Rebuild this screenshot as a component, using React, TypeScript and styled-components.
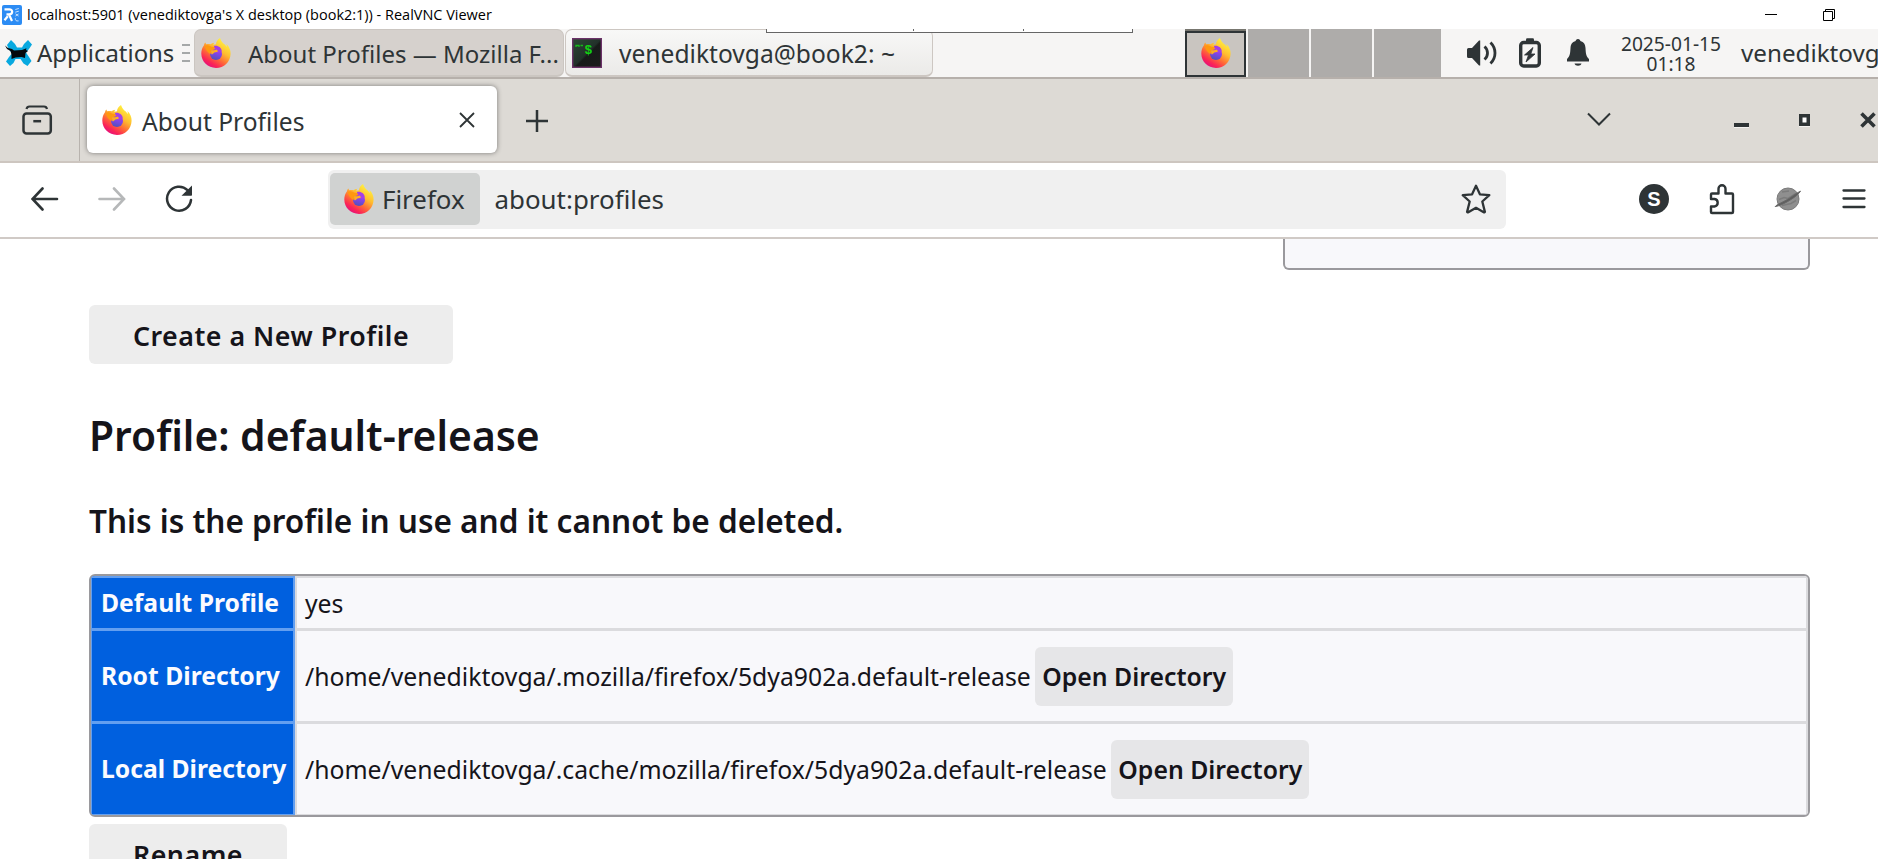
import React from 'react';
import styled, { createGlobalStyle } from 'styled-components';

const GlobalStyle = createGlobalStyle`
  *, *::before, *::after { box-sizing: border-box; }
  html, body { margin: 0; padding: 0; overflow: hidden; background: #fff; }
  svg { display: block; flex: none; }
`;

const Screen = styled.div`
  display: flex;
  flex-direction: column;
  width: 1878px;
  height: 859px;
  overflow: hidden;
  background: #fff;
  color: #2e3436;
  font-family: "Noto Sans", "Open Sans", sans-serif;
  font-size: 24px;
  white-space: nowrap;
`;

/* Viewer title bar */

const TitleBar = styled.header`
  display: flex;
  align-items: center;
  flex: none;
  height: 29px;
  padding: 0 43px 0 2px;
  background: #fff;
  color: #000;
`;

const ViewerTitle = styled.span`
  flex: 1;
  margin-left: 5px;
  font-family: "Open Sans", "Noto Sans", sans-serif;
  font-size: 14.48px;
  line-height: 20px;
`;

const WindowGlyphs = styled.div`
  display: flex;
  align-items: center;
  gap: 46px;
`;

/* Desktop panel */

const Panel = styled.div`
  position: relative;
  display: flex;
  flex: none;
  height: 50px;
  background: #f6f5f4;
  border-bottom: 2px solid #b6b0ab;
  overflow: hidden;

  & > * { flex: none; }
`;

const AppsMenu = styled.div`
  display: flex;
  align-items: center;
  width: 194px;
  padding-left: 5px;
`;

const AppsLabel = styled.span`
  width: 145px;
  margin-left: 5px;
  font-size: 23.9px;
  line-height: 48px;
`;

const TaskButton = styled.div<{ $active?: boolean; $width: number }>`
  display: flex;
  align-items: center;
  width: ${(p) => p.$width}px;
  height: 48px;
  margin-right: 1px;
  padding-left: 6px;
  border: 1px solid ${(p) => (p.$active ? '#cbc6c1' : '#cdc7c2')};
  border-bottom-width: 2px;
  border-radius: 7px;
  background: ${(p) => (p.$active ? '#d6d1cd' : 'linear-gradient(#f8f8f7, #ebeae8)')};
`;

const TaskLabel = styled.span<{ $size?: number }>`
  margin-left: 17px;
  padding-top: 1px;
  font-size: ${(p) => p.$size ?? 24}px;
  line-height: 47px;
`;

const ToolbarPeek = styled.div`
  position: absolute;
  left: 766px;
  top: 0;
  display: grid;
  grid-template-columns: 146px 110px 110px;
  width: 367px;
  height: 4px;
  background: #fff;
  border: solid #666;
  border-width: 0 1px 1px;
`;

const PeekCell = styled.i`
  height: 2px;
  & + & { border-left: 1px solid #666; }
`;

const Pager = styled.div`
  display: flex;
  gap: 2px;
  margin-left: 251px;
`;

const Workspace = styled.div<{ $width: number }>`
  width: ${(p) => p.$width}px;
  height: 48px;
  background: #aeacaa;
`;

const ActiveWorkspace = styled.div`
  display: flex;
  align-items: center;
  justify-content: center;
  width: 61px;
  height: 48px;
  padding-bottom: 2px;
  border-top: 2px solid #77766f;
  background: #c9c5c0;
  box-shadow: inset 0 0 0 2px #2e3436;
`;

const Tray = styled.div`
  display: flex;
  align-items: center;
  margin-left: 26px;
  padding-bottom: 1px;
`;

const TrayItem = styled.div<{ $before: number }>`
  margin-left: ${(p) => p.$before}px;
`;

const Clock = styled.div`
  width: 104px;
  margin-left: 30px;
  padding-top: 5px;
  font-size: 19.2px;
  line-height: 20px;
  text-align: center;
`;

const UserName = styled.span`
  margin-left: 18px;
  font-size: 24.2px;
  line-height: 48px;
`;

/* Browser chrome */

const TabStrip = styled.div`
  display: flex;
  flex: none;
  height: 84px;
  background: #dddad5;
  border-bottom: 2px solid #cdc6c0;
`;

const FirefoxView = styled.div`
  display: flex;
  width: 79.5px;
  padding: 26px 0 0 22px;
  border-right: 1.5px solid #b8b3ae;
`;

const Tab = styled.div`
  display: flex;
  align-items: center;
  width: 410px;
  height: 67px;
  margin: 7px 0 0 7.5px;
  padding: 0 22px 0 15px;
  border-radius: 6px;
  background: #fff;
  box-shadow: 0 0 5px rgba(0, 0, 0, 0.45);
`;

const TabTitle = styled.span`
  flex: 1;
  margin-left: 10px;
  padding-top: 4px;
  font-size: 24.6px;
  line-height: 40px;
`;

const NewTab = styled.div`
  margin: 31px 0 0 29px;
`;

const FrameButtons = styled.div`
  display: flex;
  align-items: flex-start;
  margin: 33px 2px 0 auto;
`;

const FrameGlyph = styled.div<{ $before?: number; $drop?: number }>`
  margin-left: ${(p) => p.$before ?? 0}px;
  padding-top: ${(p) => p.$drop ?? 0}px;
`;

const NavBar = styled.nav`
  display: flex;
  align-items: center;
  flex: none;
  height: 76px;
  padding: 0 12px 2px 31px;
  background: #fff;
  border-bottom: 2px solid #d0cac6;
`;

const NavButtons = styled.div`
  display: flex;
  align-items: center;
  gap: 39px;
  width: 297px;
`;

const UrlBar = styled.div`
  display: flex;
  align-items: center;
  width: 1178px;
  height: 59px;
  padding: 0 15px 0 2px;
  border-radius: 6px;
  background: #f0f0f0;
`;

const IdentityChip = styled.div`
  display: flex;
  align-items: center;
  width: 150px;
  height: 52px;
  padding-left: 14px;
  border-radius: 5px;
  background: #d0d2d1;
`;

const UrlText = styled.span<{ $gap: number }>`
  margin-left: ${(p) => p.$gap}px;
  font-size: 25.9px;
  line-height: 50px;
`;

const StarSlot = styled.div`
  margin-left: auto;
`;

const Extensions = styled.div`
  display: flex;
  align-items: center;
  justify-content: space-between;
  width: 227px;
  margin-left: auto;
`;

const ExtensionBadge = styled.div`
  display: flex;
  align-items: center;
  justify-content: center;
  width: 30px;
  height: 30px;
  border-radius: 50%;
  background: #2e3436;
  color: #fff;
  font-family: "Liberation Sans", sans-serif;
  font-size: 20px;
  font-weight: 700;
  line-height: 30px;
`;

/* Page */

const Page = styled.main`
  display: flex;
  flex-direction: column;
  align-items: flex-start;
  flex: 1;
  min-height: 0;
  padding: 0 68px 0 89px;
  overflow: hidden;
  color: #15141a;
  font-size: 24.75px;
`;

const NoticeEnd = styled.div`
  align-self: flex-end;
  flex: none;
  width: 527px;
  height: 31px;
  border: 2px solid #9a999d;
  border-top: 0;
  border-radius: 0 0 6px 6px;
  background: #f8f8fb;
`;

const ActionButton = styled.button<{ $width: number; $top: number }>`
  flex: none;
  width: ${(p) => p.$width}px;
  height: 59px;
  margin: ${(p) => p.$top}px 0 0;
  padding: 3px 0 0;
  border: 0;
  border-radius: 6px;
  background: #ededed;
  color: #15141a;
  font: 600 26.8px/56px "Noto Sans", sans-serif;
  letter-spacing: 0.5px;
  text-align: center;
`;

const ProfileName = styled.h2`
  margin: 41px 0 0;
  font-size: 40.8px;
  font-weight: 600;
  line-height: 60px;
`;

const ProfileNote = styled.h3`
  margin: 33px 0 0;
  font-size: 31.55px;
  font-weight: 600;
  line-height: 46px;
`;

const ProfileTable = styled.div`
  flex: none;
  width: 1721px;
  height: 243px;
  margin-top: 30px;
  border: 2px solid #9a999d;
  border-radius: 6px;
  background: #f8f8fb;
  overflow: hidden;
`;

const TableRow = styled.div<{ $height: number }>`
  display: grid;
  grid-template-columns: 204px 1fr;
  height: ${(p) => p.$height}px;
`;

const RowLabel = styled.div`
  display: flex;
  align-items: center;
  padding: 0 0 1px 9px;
  border: solid #639ff0;
  border-width: 2px 2px 1px 1px;
  background: #0060df;
  color: #fbfbfe;
  font-size: 24.7px;
  font-weight: 700;
`;

const RowValue = styled.div`
  display: flex;
  align-items: center;
  padding: 0 0 0 8px;
  border: solid #dbdbde;
  border-width: 2px 2px 1px 2px;
`;

const InlineButton = styled.button`
  width: 198px;
  height: 59px;
  margin: 0 0 0 4.5px;
  padding: 0;
  border: 0;
  border-radius: 6px;
  background: #e6e6e8;
  color: #15141a;
  font: 600 24.8px/59px "Noto Sans", sans-serif;
  text-align: center;
`;

const FirefoxLogo = ({ size = 30 }: { size?: number }) => {
  const id = React.useId();
  return (
    <svg width={size} height={size} viewBox="0 0 30 30">
      <defs>
        <linearGradient id={`${id}b`} x1="0.8" y1="0.1" x2="0.25" y2="0.95">
          <stop offset="0" stopColor="#fff13f" />
          <stop offset="0.35" stopColor="#ffbd2f" />
          <stop offset="0.62" stopColor="#ff6b36" />
          <stop offset="0.85" stopColor="#fb2457" />
          <stop offset="1" stopColor="#e5127b" />
        </linearGradient>
        <linearGradient id={`${id}c`} x1="0.7" y1="0" x2="0.4" y2="1">
          <stop offset="0" stopColor="#b43ee8" />
          <stop offset="0.5" stopColor="#8045e6" />
          <stop offset="1" stopColor="#4f52b8" />
        </linearGradient>
      </defs>
      <path
        fill={`url(#${id}b)`}
        d="M19 0c1 2 1.200 3.600 3.400 5.400C24 6.400 25 7.700 25.800 9c.1-1.200-.1-2.200-.4-3.100 2.800 2.600 4.300 6 4.200 9.800C29.300 24 23 30 15 30S.3 23.800.3 15.600c0-3.200 1-6 2.700-8.300.1-.900.6-2.200 1.400-2.800.2.800.4 1.300.9 1.700 1.400-.4 3-.4 4.300.1 1-1 2.300-1.500 3.700-1.600-.5.600-.9 1.300-1 2.100 1 .2 1.500-.2 2.700-.5 0-2.400 1.700-5 4-6.300Z"
      />
      <circle cx="15" cy="16" r="6" fill={`url(#${id}c)`} />
      <path fill="#a43fe6" d="M13 8c4.200-.8 7.500 1.700 7.800 5.500l-4 1.400-3.600-3Z" />
      <path fill="#ff980f" d="M3.700 8.100c2.200-1.400 4.500-1.100 6.700.6 1.600-.2 3.200.5 3.900 1.700-.8 1.100-2.800 1.300-3.500 2.200-.9 1-.4 2.800-1.500 3.400-2.400-1.300-4.700-3.900-5.600-7.900Z" />
      <path fill="#ffae21" d="M10 12.600c1.500-.5 4-.2 5.500-1.100 1 .6 1.400 1.300 1.300 2-1 .9-2.600.4-3.700 1.300-1 .8-1.300 1.700-2.800 1.500Z" />
    </svg>
  );
};

const ViewerLogo = () => (
  <svg width="20" height="20" viewBox="0 0 20 20">
    <rect width="20" height="20" rx="2" fill="#2c8cf4" />
    <path d="M2.500 4.300h4.700c4 0 4 5 0 5H4.500M7 9.500l3 6.500M2.500 15.200l3.300-4" fill="none" stroke="#fff" strokeWidth="2.200" />
    <path d="M13.300 4.500l3.500-1M13.300 7.200l3.500-1M13.500 8.800l3 2.200M13.500 11l3-2M13.300 13.300c0 2 .6 3 3.300 2.600" fill="none" stroke="#c4e0ff" strokeWidth="1" />
  </svg>
);

const XfceLogo = () => (
  <svg width="27" height="26" viewBox="0 0 27 26">
    <path
      d="M6 0l4 4 2 3.500h5L19 4l4-4 4 4.500-3 4.500-3 3.500 3 4.500 2.500 4-4 5-4-2.500-3-4.500h-5L8.500 23 5 26l-4-4.500L4 17l3-3.500-3-4-2-4.500Z"
      fill="#08a9e0"
    />
    <path d="M0 5.500l3 2.500 4 1 2 1.500 8-.5 4.500-1.800-.5 1.800 2 1-2.500 2-.5 5-3.500-1-6 .5-4 1.500 0-4.500L5.500 11 2 9Z" fill="#04090d" />
  </svg>
);

const Grip = () => (
  <svg width="8" height="18" viewBox="0 0 8 18" stroke="#8b8e8f" strokeWidth="1.500">
    <path d="M0 1h8M0 9h8M0 17h8" />
  </svg>
);

const TerminalIcon = () => (
  <svg width="30" height="30" viewBox="0 0 30 30">
    <defs>
      <linearGradient id="term" x1="0" y1="0" x2="1" y2="1">
        <stop offset="0" stopColor="#2b4a34" />
        <stop offset="0.5" stopColor="#22302a" />
        <stop offset="0.55" stopColor="#171a19" />
        <stop offset="1" stopColor="#1c1c1c" />
      </linearGradient>
    </defs>
    <rect x="0.700" y="0.700" width="28.600" height="28.600" fill="url(#term)" stroke="#6b3268" strokeWidth="1.400" />
    <path d="M4 9V7.500h3V9M8.500 7.500h2.500" fill="none" stroke="#17b81c" strokeWidth="1.300" />
    <text x="12.500" y="15.500" fill="#12d313" fontFamily="Liberation Mono, monospace" fontWeight="700" fontSize="13">$</text>
  </svg>
);

const VolumeIcon = () => (
  <svg width="30" height="26" viewBox="0 0 30 26">
    <path d="M0 9.500Q0 8 1.500 8H5l7-7.500h1.200v25H12L5 18H1.500Q0 18 0 16.500Z" fill="#2e3436" />
    <path d="M17.500 6.500c4 3.500 4 9.500 0 13M23.500 2.500c6 6 6 15 0 21" fill="none" stroke="#2e3436" strokeWidth="2.800" />
  </svg>
);

const BatteryIcon = () => (
  <svg width="22" height="30" viewBox="0 0 22 30">
    <path d="M7 4V1.500Q7 .3 8.300.3h5.400Q15 .3 15 1.500V4" fill="#2e3436" />
    <rect x="1.700" y="4.500" width="18.600" height="23.500" rx="3" fill="none" stroke="#2e3436" strokeWidth="3.400" />
    <path d="M14 9.500L5.500 17h4l-2.500 7 9-8h-4.200Z" fill="#2e3436" stroke="#2e3436" strokeWidth="0.800" />
  </svg>
);

const BellIcon = () => (
  <svg width="22" height="27" viewBox="0 0 22 27" fill="#2e3436">
    <path d="M11 0c1.500 0 2.300 1 2.300 2 3.700.8 5 3.500 5.200 7 .3 6 .8 8.500 3.500 11v2.500H0V20c2.700-2.500 3.200-5 3.500-11 .2-3.500 1.500-6.200 5.200-7C8.700 1 9.500 0 11 0Z" />
    <path d="M7.500 24.500h7c-.7 3-6.300 3-7 0Z" />
  </svg>
);

const ArchiveIcon = () => (
  <svg width="31" height="30" viewBox="0 0 31 30" fill="none" stroke="#2e3436">
    <path d="M4.500 4q.5-2.500 3-2.500h14.500q2.500 0 3 2.500" strokeWidth="2.200" />
    <rect x="1.500" y="8.500" width="27.300" height="20" rx="3" strokeWidth="2.500" />
    <path d="M11.300 16.200h7.800" strokeWidth="2.500" />
  </svg>
);

const BackIcon = ({ faded }: { faded?: boolean }) => (
  <svg width="28" height="24" viewBox="0 0 28 24" fill="none" stroke={faded ? '#b6b8b9' : '#2e3436'} strokeWidth="2.600" strokeLinecap="round">
    {faded ? <path d="M1.500 12h24M16 1.500L26 12 16 22.500" /> : <path d="M26 12h-24M11.500 1.500L1.500 12l10 10.500" />}
  </svg>
);

const ReloadIcon = () => (
  <svg width="28" height="28" viewBox="0 0 28 28">
    <path d="M22.500 5.200A12 12 0 1 0 26 15" fill="none" stroke="#2e3436" strokeWidth="2.500" strokeLinecap="round" />
    <path d="M27 .5V10q0 .8-.8.800H16.500Z" fill="#2e3436" />
  </svg>
);

const StarIcon = () => (
  <svg width="30" height="30" viewBox="0 0 30 30" fill="none" stroke="#2e3436" strokeWidth="2.300" strokeLinejoin="round">
    <path d="M15 1.800l3.900 8.500 9.400.9-7 6.300 2.600 10.400q-.3.900-1.200.300L15 23.800l-7.700 4.400q-.900.600-1.200-.3L8.700 17.500l-7-6.300 9.400-.9Z" />
  </svg>
);

const PuzzleIcon = () => (
  <svg width="26" height="31" viewBox="0 0 26 31" fill="none" stroke="#2e3436" strokeWidth="2.400" strokeLinejoin="round">
    <path d="M2 15V10.500Q2 9.500 3 9.500H9.500V4.800a3.500 3.500 0 0 1 7 0V9.500H23q1 0 1 1V28q0 1-1 1H3q-1 0-1-1V22.500h3.500a3.800 3.800 0 0 0 0-7.500Z" />
  </svg>
);

const PlanetIcon = () => (
  <svg width="28" height="24" viewBox="0 0 28 24">
    <circle cx="14" cy="12" r="11" fill="#8f8f8f" stroke="#7b7b7b" />
    <path d="M5 12.500l5-2 4 1 8-5M8 5l7-1M8 18.500l9-2 5-3" stroke="#7c7c7c" strokeWidth="1.500" fill="none" />
    <path d="M26.500 4.200C24 9 9 18.500 1.200 19.600 3 17.500 6 16.500 12 13.300 18 10 22 6 26.500 4.200Z" fill="#5d5d5d" stroke="#686868" />
  </svg>
);

const MenuIcon = () => (
  <svg width="24" height="20" viewBox="0 0 24 20" stroke="#2e3436" strokeWidth="2.300" strokeLinecap="round">
    <path d="M1.500 1.500h21M1.500 9.500h21M1.500 18h21" />
  </svg>
);

const details = [
  { label: 'Default Profile', value: 'yes', height: 53, open: false },
  { label: 'Root Directory', value: '/home/venediktovga/.mozilla/firefox/5dya902a.default-release', height: 93, open: true },
  { label: 'Local Directory', value: '/home/venediktovga/.cache/mozilla/firefox/5dya902a.default-release', height: 93, open: true },
];

export default function App() {
  return (
    <>
      <GlobalStyle />
      <Screen>
        <TitleBar>
          <ViewerLogo />
          <ViewerTitle>localhost:5901 (venediktovga's X desktop (book2:1)) - RealVNC Viewer</ViewerTitle>
          <WindowGlyphs>
            <svg width="12" height="12" stroke="#000"><path d="M0 5.500h12" /></svg>
            <svg width="12" height="12" fill="none" stroke="#000">
              <path d="M.5 2.500h9v9h-9ZM2.500 2.500V.5h9v9h-2" />
            </svg>
          </WindowGlyphs>
        </TitleBar>

        <Panel>
          <AppsMenu>
            <XfceLogo />
            <AppsLabel>Applications</AppsLabel>
            <Grip />
          </AppsMenu>
          <TaskButton $active $width={370}>
            <FirefoxLogo />
            <TaskLabel>About Profiles — Mozilla F...</TaskLabel>
          </TaskButton>
          <TaskButton $width={368}>
            <TerminalIcon />
            <TaskLabel $size={24.6}>venediktovga@book2: ~</TaskLabel>
          </TaskButton>
          <ToolbarPeek><PeekCell /><PeekCell /><PeekCell /></ToolbarPeek>
          <Pager>
            <ActiveWorkspace><FirefoxLogo /></ActiveWorkspace>
            <Workspace $width={61} />
            <Workspace $width={61} />
            <Workspace $width={67} />
          </Pager>
          <Tray>
            <VolumeIcon />
            <TrayItem $before={22}><BatteryIcon /></TrayItem>
            <TrayItem $before={26}><BellIcon /></TrayItem>
          </Tray>
          <Clock>2025-01-15<br />01:18</Clock>
          <UserName>venediktovga</UserName>
        </Panel>

        <TabStrip>
          <FirefoxView><ArchiveIcon /></FirefoxView>
          <Tab>
            <FirefoxLogo />
            <TabTitle>About Profiles</TabTitle>
            <svg width="16" height="16" stroke="#2e3436" strokeWidth="1.800"><path d="M1 1l14 14M15 1L1 15" /></svg>
          </Tab>
          <NewTab>
            <svg width="22" height="22" stroke="#2e3436" strokeWidth="2.500"><path d="M0 11h22M11 0v22" /></svg>
          </NewTab>
          <FrameButtons>
            <FrameGlyph>
              <svg width="24" height="14" fill="none" stroke="#2e3436" strokeWidth="2"><path d="M1 1.500L12 12.500 23 1.500" /></svg>
            </FrameGlyph>
            <FrameGlyph $before={123} $drop={11}>
              <svg width="15" height="5"><rect width="15" height="4" fill="#2e3436" /><rect y="4" width="15" height="1" fill="#f4f2f0" /></svg>
            </FrameGlyph>
            <FrameGlyph $before={50} $drop={2}>
              <svg width="11" height="13"><rect y="12" width="11" height="1" fill="#f4f2f0" /><rect x="1.750" y="1.750" width="7.500" height="8.500" fill="#fff" stroke="#2e3436" strokeWidth="3.500" /></svg>
            </FrameGlyph>
            <FrameGlyph $before={50}>
              <svg width="16" height="16" stroke="#2e3436" strokeWidth="3.600"><path d="M1.500 1.500l13 13M14.500 1.500l-13 13" /></svg>
            </FrameGlyph>
          </FrameButtons>
        </TabStrip>

        <NavBar>
          <NavButtons>
            <BackIcon />
            <BackIcon faded />
            <ReloadIcon />
          </NavButtons>
          <UrlBar>
            <IdentityChip>
              <FirefoxLogo />
              <UrlText $gap={8}>Firefox</UrlText>
            </IdentityChip>
            <UrlText $gap={14.5}>about:profiles</UrlText>
            <StarSlot><StarIcon /></StarSlot>
          </UrlBar>
          <Extensions>
            <ExtensionBadge>S</ExtensionBadge>
            <PuzzleIcon />
            <PlanetIcon />
            <MenuIcon />
          </Extensions>
        </NavBar>

        <Page>
          <NoticeEnd />
          <ActionButton $width={364} $top={35}>Create a New Profile</ActionButton>
          <ProfileName>Profile: default-release</ProfileName>
          <ProfileNote>This is the profile in use and it cannot be deleted.</ProfileNote>
          <ProfileTable>
            {details.map((d) => (
              <TableRow key={d.label} $height={d.height}>
                <RowLabel>{d.label}</RowLabel>
                <RowValue>
                  {d.value}
                  {d.open && <InlineButton>Open Directory</InlineButton>}
                </RowValue>
              </TableRow>
            ))}
          </ProfileTable>
          <ActionButton $width={198} $top={7}>Rename</ActionButton>
        </Page>
      </Screen>
    </>
  );
}
